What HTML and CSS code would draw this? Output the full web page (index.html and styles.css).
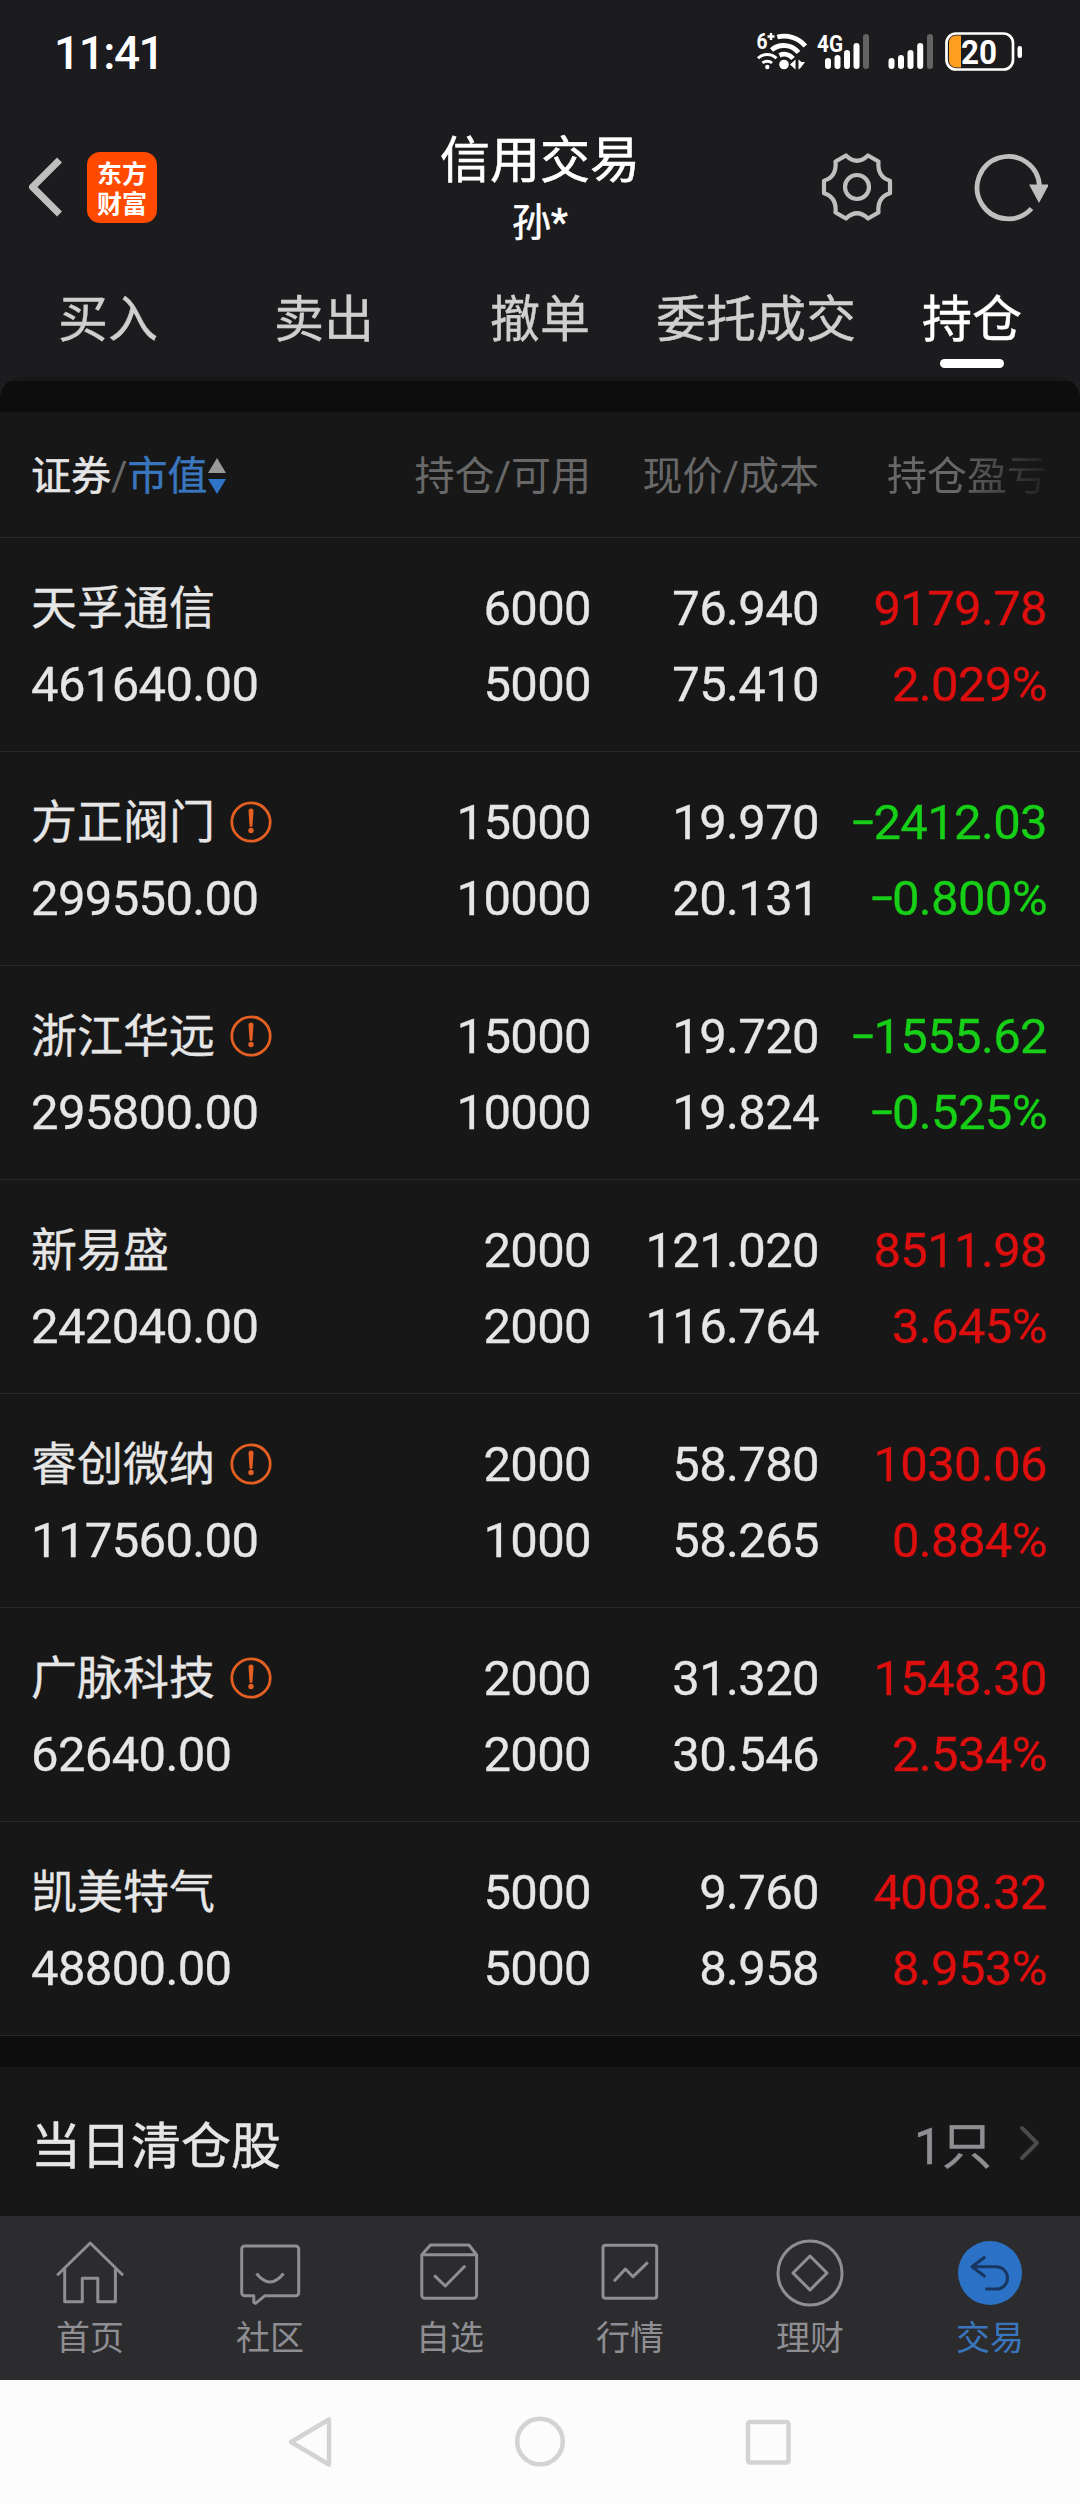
FILE: index.html
```
<!DOCTYPE html>
<html lang="zh-CN">
<head>
  <meta charset="UTF-8">
  <title>信用交易</title>
  <meta name="viewport" content="width=device-width, initial-scale=1.0">
  <link rel="stylesheet" href="styles.css">
</head>
<body>

  <div class="status">
    <span class="time">11:41</span>
    <svg class="status-icons" width="280" height="48" viewBox="0 0 280 48">
      <!-- wifi -->
      <text class="sig-text" x="6.500" y="20.500" font-size="22" textLength="11" lengthAdjust="spacingAndGlyphs">6</text>
      <path d="M17.500 8.500h7M21 5v7" stroke="#fff" stroke-width="2.400"/>
      <g fill="none" stroke="#fff" stroke-width="4.800">
        <path d="M27.300 9A27.700 27.700 0 0 1 55.300 18"/>
        <path d="M21.500 22A19 19 0 0 1 48.500 24.500"/>
        <path d="M29.500 27.300A11 11 0 0 1 43 30.500"/>
      </g>
      <circle cx="34" cy="36.500" r="4.800" fill="#fff"/>
      <g fill="none" stroke="#fff" stroke-width="3">
        <path d="M8 30.300A13 13 0 0 1 26.500 30.300"/>
        <path d="M12.500 35A7 7 0 0 1 22 35"/>
      </g>
      <circle cx="17.300" cy="39" r="2.200" fill="#fff"/>
      <path d="M40 36.500l5.500-5v10zM48.500 31.500v10l2-1.500 4.500-6h-3.500z" fill="#fff"/>
      <!-- signals -->
      <text class="sig-text" x="67" y="23.500" font-size="24" textLength="26" lengthAdjust="spacingAndGlyphs">4G</text>
      <g fill="#fff">
        <rect x="75" y="30" width="6" height="11" rx="3"/>
        <rect x="84.500" y="27" width="6" height="14" rx="3"/>
        <rect x="94" y="22" width="6" height="19" rx="3"/>
        <rect x="103.500" y="15" width="6" height="26" rx="3"/>
        <rect x="138.500" y="30" width="6" height="11" rx="3"/>
        <rect x="148" y="27" width="6" height="14" rx="3"/>
        <rect x="157.500" y="22" width="6" height="19" rx="3"/>
        <rect x="167.200" y="15" width="6" height="26" rx="3"/>
      </g>
      <rect x="113" y="6" width="6" height="35" rx="3" fill="#636364"/>
      <rect x="177" y="6" width="6" height="35" rx="3" fill="#636364"/>
      <!-- battery -->
      <path d="M211 7.500v32h-5a7 7 0 0 1-7-7v-18a7 7 0 0 1 7-7z" fill="#ff9e1f"/>
      <rect x="196.500" y="5.500" width="66.500" height="36" rx="9.500" fill="none" stroke="#fff" stroke-width="2.700"/>
      <rect x="267.500" y="18" width="4.500" height="12" rx="2.200" fill="#fff"/>
      <text class="sig-text" x="211" y="36" font-size="34" textLength="36" lengthAdjust="spacingAndGlyphs">20</text>
    </svg>
  </div>

  <div class="header">
    <div class="left">
      <svg width="36" height="62" viewBox="0 0 36 62"><path d="M33.500 4L6.500 31l27 27" fill="none" stroke="#bfbfbf" stroke-width="7" stroke-linejoin="round"/></svg>
      <div class="logo"><span>东方</span><span>财富</span></div>
    </div>
    <div class="title">
      <h1>信用交易</h1>
      <p>孙*</p>
    </div>
    <div class="right">
      <svg width="72" height="72" viewBox="0 0 72 72" fill="none" stroke="#bfbfbf" stroke-width="4.200" stroke-linejoin="round">
        <path d="M25 4.500Q36 15 47 4.500L57.500 10.500C56.500 21 60 27 69 29.700V42.300C60 45 56.500 51 57.500 61.500L47 67.500Q36 57 25 67.500L14.500 61.500C15.500 51 12 45 3 42.300V29.700C12 27 15.500 21 14.500 10.500Z"/>
        <circle cx="36" cy="36" r="12"/>
      </svg>
      <svg width="76" height="72" viewBox="0 0 76 72">
        <path d="M67.500 36A31.200 31.200 0 1 0 59.500 57.500" fill="none" stroke="#bfbfbf" stroke-width="4.800"/>
        <path d="M57 33.500h20L67 52z" fill="#bfbfbf"/>
      </svg>
    </div>
  </div>

  <div class="tabs">
    <span>买入</span>
    <span>卖出</span>
    <span>撤单</span>
    <span>委托成交</span>
    <span class="on">持仓</span>
  </div>

  <div class="sheet-top"><div></div></div>

  <div class="row thead">
    <div class="sort"><b>证券</b>/<em>市值</em>
      <svg width="18" height="38" viewBox="0 0 18 38"><path d="M0 16L9 1l9 15z" fill="#999"/><path d="M0 22h18L9 37z" fill="#2f74c6"/></svg>
    </div>
    <div>持仓/可用</div>
    <div>现价/成本</div>
    <div class="fade">持仓盈亏</div>
  </div>

  <div id="list"></div>

  <div class="gap"></div>
  <div class="cleared">
    <span>当日清仓股</span>
    <span class="count">1只</span>
    <svg width="22" height="38" viewBox="0 0 22 38"><path d="M3 5l15 15L3 35" fill="none" stroke="#4a4a4c" stroke-width="4" stroke-linecap="round" stroke-linejoin="round"/></svg>
  </div>

  <div class="nav">
    <div>
      <svg viewBox="0 0 72 72"><path d="M3.200 38.300L36.200 6 69 38.300M10.700 32v32.700h17.600V41.300h15.500v23.400h17.600V32"/></svg>
      首页
    </div>
    <div>
      <svg viewBox="0 0 72 72"><path d="M10.700 9h51a3 3 0 0 1 3 3v43.700a3 3 0 0 1-3 3H31l-9.500 7.600-1.700-.8v-6.800h-9.100a3 3 0 0 1-3-3V12a3 3 0 0 1 3-3zM22.500 36.500q13.500 17 27 0"/></svg>
      社区
    </div>
    <div>
      <svg viewBox="0 0 72 72"><path d="M7.800 17.700L16.500 8H55l7.600 9.700v40.600a3 3 0 0 1-3 3H10.800a3 3 0 0 1-3-3zh54.800M20.200 38.300L31.300 49l19.900-20.300"/></svg>
      自选
    </div>
    <div>
      <svg viewBox="0 0 72 72"><rect x="9" y="8.300" width="53.700" height="53" rx="2.500"/><path d="M20 44.300L31.400 32l7.600 7.700 14.800-14.400"/></svg>
      行情
    </div>
    <div>
      <svg viewBox="0 0 72 72"><circle cx="36" cy="36" r="32"/><path d="M36 19l17 17-17 17-17-17z"/></svg>
      理财
    </div>
    <div class="on">
      <svg viewBox="0 0 72 72"><circle cx="36" cy="36" r="32" fill="#2b72c7" stroke="none"/><path d="M31.300 19.700L18 29.700l13.300 10M18 29.700h24.300a11.200 11.200 0 0 1 0 22.400h-11" stroke="#18365f"/></svg>
      交易
    </div>
  </div>

  <div class="sysbar">
    <svg width="50" height="54" viewBox="0 0 50 54"><path d="M42 4.500v45L4 27z"/></svg>
    <svg width="54" height="54" viewBox="0 0 54 54"><circle cx="27" cy="26.500" r="22.800"/></svg>
    <svg width="50" height="54" viewBox="0 0 50 54"><rect x="5" y="7" width="40.500" height="40.500" rx="2"/></svg>
  </div>

  <script>
    // name, market value, held, available, price, cost, profit, percent, warning
    const stocks = [
      ["天孚通信", "461640.00", "6000", "5000", "76.940", "75.410", "9179.78", "2.029%", 0],
      ["方正阀门", "299550.00", "15000", "10000", "19.970", "20.131", "-2412.03", "-0.800%", 1],
      ["浙江华远", "295800.00", "15000", "10000", "19.720", "19.824", "-1555.62", "-0.525%", 1],
      ["新易盛", "242040.00", "2000", "2000", "121.020", "116.764", "8511.98", "3.645%", 0],
      ["睿创微纳", "117560.00", "2000", "1000", "58.780", "58.265", "1030.06", "0.884%", 1],
      ["广脉科技", "62640.00", "2000", "2000", "31.320", "30.546", "1548.30", "2.534%", 1],
      ["凯美特气", "48800.00", "5000", "5000", "9.760", "8.958", "4008.32", "8.953%", 0]
    ];

    const warn = `<svg width="42" height="42" viewBox="0 0 42 42"><circle cx="21" cy="21" r="19.200" fill="none" stroke="#e45f21" stroke-width="2.800"/><path d="M18.500 10a2.500 2.500 0 0 1 5 0l-1 14.500a1.500 1.500 0 0 1-3 0z" fill="#e45f21"/><circle cx="21" cy="29.500" r="2.700" fill="#e45f21"/></svg>`;

    // wider minus sign
    const num = v => v.replace("-", "<span class=\"minus\">-</span>");

    document.getElementById("list").innerHTML = stocks.map(s => {
      const cls = s[6][0] === "-" ? "down" : "up";
      return `<div class="row">
        <div><p class="name">${s[0]}${s[8] ? warn : ""}</p><p>${s[1]}</p></div>
        <div><p>${s[2]}</p><p>${s[3]}</p></div>
        <div><p>${s[4]}</p><p>${s[5]}</p></div>
        <div class="${cls}"><p>${num(s[6])}</p><p>${num(s[7])}</p></div>
      </div>`;
    }).join("");
  </script>

</body>
</html>
```
FILE: styles.css
```
* {
  box-sizing: border-box;
  margin: 0;
  padding: 0;
}
body {
  width: 1080px;
  height: 2504px;
  overflow: hidden;
  background: #171717;
  color: #e6e6e6;
  font-family: Roboto, "Noto Sans CJK SC", sans-serif;
}
svg {
  display: block;
  flex: none;
}
.status {
  height: 104px;
  padding: 0 50px 0 54px;
  background: #1c1c1e;
  display: flex;
  justify-content: space-between;
}
.time {
  font-size: 46px;
  font-weight: 500;
  line-height: 107px;
  letter-spacing: -1.5px;
  color: #fff;
}
.status-icons {
  margin-top: 28px;
}
.sig-text {
  fill: #fff;
  font-weight: 700;
}
.header {
  height: 166px;
  padding: 0 32px 0 26px;
  background: #1c1c1e;
  display: grid;
  grid-template-columns: 364px 300px 1fr;
}
.left {
  display: flex;
  align-items: center;
  gap: 25px;
}
.logo {
  width: 70px;
  height: 71px;
  border-radius: 13px;
  background: #ff4a00;
  color: #fff;
  font: 700 25px/30px "Noto Sans CJK SC", sans-serif;
  display: flex;
  flex-direction: column;
  align-items: center;
  justify-content: center;
}
.title {
  padding-top: 22px;
  text-align: center;
  color: #fff;
  -webkit-text-stroke: 0.6px;
}
.title h1 {
  font-size: 50px;
  font-weight: 400;
  line-height: 70px;
}
.title p {
  font-size: 39px;
  line-height: 54px;
}
.right {
  display: flex;
  align-items: center;
  justify-content: flex-end;
  gap: 79px;
}
.tabs {
  height: 107px;
  background: #1c1c1e;
  display: grid;
  grid-template-columns: repeat(5, 216px);
  text-align: center;
  font-size: 50px;
  line-height: 100px;
  color: #cfcfcf;
  -webkit-text-stroke: 0.4px;
}
.tabs .on {
  color: #fff;
}
.tabs .on::after {
  content: "";
  display: block;
  width: 64px;
  height: 9px;
  margin: -11px auto 0;
  border-radius: 5px;
  background: #fff;
}
.sheet-top {
  height: 35px;
  background: #1c1c1e;
}
.sheet-top div {
  height: 35px;
  border-radius: 22px 22px 0 0;
  background: linear-gradient(#171717 4px, #0d0d0d 4px);
}
.gap {
  height: 31px;
  background: #0d0d0d;
}
.row {
  height: 214px;
  padding: 32px 33px 0 31px;
  border-bottom: 1px solid #282828;
  display: grid;
  grid-template-columns: 332px 228px 228px 228px;
  text-align: right;
  font-size: 49px;
  letter-spacing: -0.65px;
  line-height: 77px;
}
.row > div:first-child {
  text-align: left;
}
.row p {
  height: 76px;
  white-space: nowrap;
  -webkit-text-stroke: 0.3px;
}
.row .name {
  display: flex;
  align-items: center;
  gap: 15px;
  font-size: 46px;
  letter-spacing: 0;
  line-height: 75px;
}
.minus {
  display: inline-block;
  margin: 0 4px 0 5px;
  transform: translateY(-2px) scaleX(1.6);
}
.up {
  color: #dd0f0e;
}
.down {
  color: #16cf16;
}
.thead {
  height: 126px;
  padding-top: 26px;
  font-size: 40px;
  letter-spacing: 0;
  color: #686868;
}
.thead b {
  font-weight: 400;
  color: #e6e6e6;
  -webkit-text-stroke: 0.6px;
}
.thead em {
  font-style: normal;
  color: #3a76be;
  -webkit-text-stroke: 0.4px;
}
.sort {
  display: flex;
  align-items: center;
  height: 76px;
}
.fade {
  -webkit-mask-image: linear-gradient(to right, #000 60%, transparent 105%);
  mask-image: linear-gradient(to right, #000 60%, transparent 105%);
}
.cleared {
  height: 149px;
  padding: 0 39px 0 31px;
  display: flex;
  align-items: center;
  font-size: 50px;
  -webkit-text-stroke: 0.5px;
}
.count {
  margin-left: auto;
  margin-right: 27px;
  color: #8e8e93;
}
.nav {
  height: 164px;
  padding-top: 21px;
  background: #2c2c2e;
  display: grid;
  grid-template-columns: repeat(6, 180px);
  text-align: center;
  font-size: 34px;
  line-height: 58px;
  color: #8e8e93;
}
.nav svg {
  width: 72px;
  height: 72px;
  margin: 0 auto;
  fill: none;
  stroke: #8e8e93;
  stroke-width: 3;
  stroke-linejoin: round;
}
.nav .on {
  color: #3a76be;
}
.sysbar {
  height: 124px;
  background: #fcfcfc;
  display: flex;
  align-items: center;
  justify-content: center;
  gap: 176px;
}
.sysbar svg {
  fill: none;
  stroke: #d3d3d3;
  stroke-width: 4.5;
  stroke-linejoin: round;
}
```
